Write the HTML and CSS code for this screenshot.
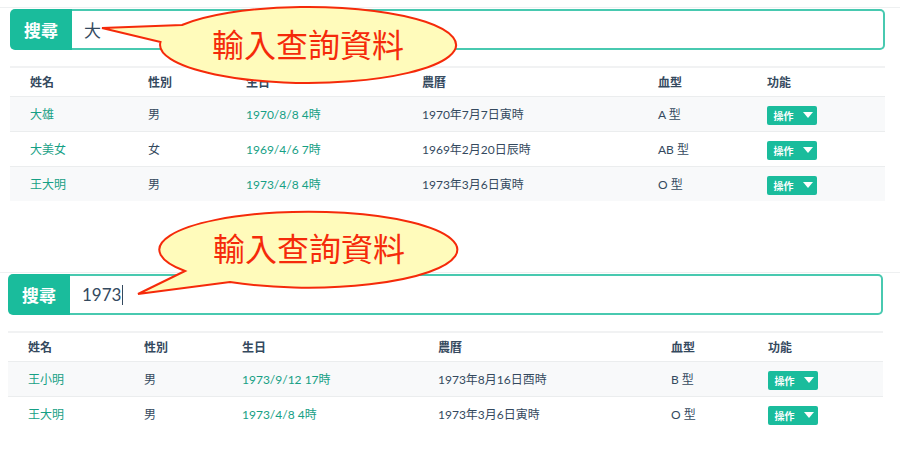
FILE: index.html
```html
<!DOCTYPE html>
<html lang="zh-Hant">
<head>
  <meta charset="UTF-8" />
  <meta name="viewport" content="width=device-width, initial-scale=1.0" />
  <title>搜尋資料</title>
  <link rel="stylesheet" href="styles.css">
</head>
<body>
  <!-- First search: 大 -->
  <div class="panel panel-first">
    <div class="search-group">
      <span class="search-label">搜尋</span>
      <div class="search-input">大</div>
    </div>
    <table class="data-table table-first">
      <colgroup>
        <col class="c1"><col class="c2"><col class="c3"><col class="c4"><col class="c5"><col class="c6">
      </colgroup>
      <thead>
        <tr><th>姓名</th><th>性別</th><th>生日</th><th>農曆</th><th>血型</th><th>功能</th></tr>
      </thead>
      <tbody>
        <tr>
          <td class="link">大雄</td><td>男</td><td class="link">1970/8/8 4時</td>
          <td>1970年7月7日寅時</td><td>A 型</td>
          <td><button class="btn-op">操作 <span class="caret"></span></button></td>
        </tr>
        <tr>
          <td class="link">大美女</td><td>女</td><td class="link">1969/4/6 7時</td>
          <td>1969年2月20日辰時</td><td>AB 型</td>
          <td><button class="btn-op">操作 <span class="caret"></span></button></td>
        </tr>
        <tr>
          <td class="link">王大明</td><td>男</td><td class="link">1973/4/8 4時</td>
          <td>1973年3月6日寅時</td><td>O 型</td>
          <td><button class="btn-op">操作 <span class="caret"></span></button></td>
        </tr>
      </tbody>
    </table>
  </div>

  <!-- Second search: 1973 -->
  <div class="panel panel-second">
    <div class="search-group">
      <span class="search-label">搜尋</span>
      <div class="search-input">1973<span class="cursor"></span></div>
    </div>
    <table class="data-table table-second">
      <colgroup>
        <col class="c1"><col class="c2"><col class="c3"><col class="c4"><col class="c5"><col class="c6">
      </colgroup>
      <thead>
        <tr><th>姓名</th><th>性別</th><th>生日</th><th>農曆</th><th>血型</th><th>功能</th></tr>
      </thead>
      <tbody>
        <tr>
          <td class="link">王小明</td><td>男</td><td class="link">1973/9/12 17時</td>
          <td>1973年8月16日酉時</td><td>B 型</td>
          <td><button class="btn-op">操作 <span class="caret"></span></button></td>
        </tr>
        <tr>
          <td class="link">王大明</td><td>男</td><td class="link">1973/4/8 4時</td>
          <td>1973年3月6日寅時</td><td>O 型</td>
          <td><button class="btn-op">操作 <span class="caret"></span></button></td>
        </tr>
      </tbody>
    </table>
  </div>

  <!-- Callout bubbles drawn over the page -->
  <svg class="callouts" width="900" height="449" viewBox="0 0 900 449">
    <path class="bubble" d="M182,25 L102,28 L160.5,42 A148,38 0 1 0 182,25 Z" />
    <text class="bubble-text" x="308" y="57">輸入查詢資料</text>
    <path class="bubble" d="M185,271 L138,294 L230,282 A149,38 0 1 0 185,271 Z" />
    <text class="bubble-text" x="309" y="261">輸入查詢資料</text>
  </svg>
</body>
</html>
```

FILE: styles.css
```css
/* Base styles */
body {
  font-family: Lato, "Noto Sans CJK TC", sans-serif;
  color: #34495e;
  background: #fff;
  margin: 0;
  padding: 7px 0 0 0;
}
/* Each search block */
.panel {
  border-top: 1px solid #eef0f1;
  padding-top: 1px;
}
.panel-first {
  padding-left: 10px;
  padding-right: 15px;
  margin-bottom: 71px;
}
.panel-second {
  padding-left: 8px;
  padding-right: 17px;
}
.search-group {
  display: flex;
  height: 41px;
  margin-bottom: 16px;
}
.search-label {
  width: 62px;
  background: #1abc9c;
  color: #fff;
  font-size: 17px;
  font-weight: bold;
  display: flex;
  align-items: center;
  justify-content: center;
  border-radius: 5px 0 0 5px;
}
.search-input {
  flex: 1;
  display: flex;
  align-items: center;
  padding-left: 12px;
  font-size: 17px;
  color: #34495e;
  border: 2px solid #48c9b0;
  border-left: none;
  border-radius: 0 5px 5px 0;
}
.cursor {
  display: inline-block;
  width: 1px;
  height: 20px;
  background: #34495e;
  margin-left: 1px;
}
/* Table */
.data-table {
  width: 100%;
  border-collapse: collapse;
  table-layout: fixed;
  font-size: 12px;
  border-top: 2px solid #f1f2f3;
}
.data-table th {
  height: 27px;
  text-align: left;
  font-weight: 600;
  padding: 0 0 1px 0;
}
.data-table td {
  height: 32px;
  padding: 0 0 2px 0;
  border-top: 1px solid #ebedee;
}
.data-table th:first-child,
.data-table td:first-child {
  padding-left: 20px;
}
.data-table tbody tr:nth-child(odd) {
  background: #f8f9fa;
}
.data-table .link {
  color: #16a085;
}
.table-first .c1 { width: 138px; }
.table-first .c2 { width: 98px; }
.table-first .c3 { width: 176px; }
.table-first .c4 { width: 236px; }
.table-first .c5 { width: 109px; }
.table-second .c1 { width: 136px; }
.table-second .c2 { width: 98px; }
.table-second .c3 { width: 196px; }
.table-second .c4 { width: 233px; }
.table-second .c5 { width: 97px; }
/* Small dropdown button */
.btn-op {
  background: #1abc9c;
  color: #fff;
  border: none;
  border-radius: 2px;
  width: 50px;
  height: 19px;
  padding: 0 0 0 2px;
  font-family: inherit;
  font-size: 10px;
  font-weight: bold;
  display: flex;
  align-items: center;
  justify-content: center;
  gap: 9px;
  margin-top: 4px;
}
.caret {
  width: 0;
  height: 0;
  border-left: 5px solid transparent;
  border-right: 5px solid transparent;
  border-top: 6px solid #fff;
}
/* Callout overlay */
.callouts {
  position: absolute;
  left: 0;
  top: 0;
  pointer-events: none;
}
.bubble {
  fill: #fffbbb;
  stroke: #f52a0a;
  stroke-width: 2;
  stroke-linejoin: miter;
}
.bubble-text {
  font-family: "Noto Sans CJK TC", sans-serif;
  font-size: 32px;
  fill: #f52a0a;
  text-anchor: middle;
}
```
